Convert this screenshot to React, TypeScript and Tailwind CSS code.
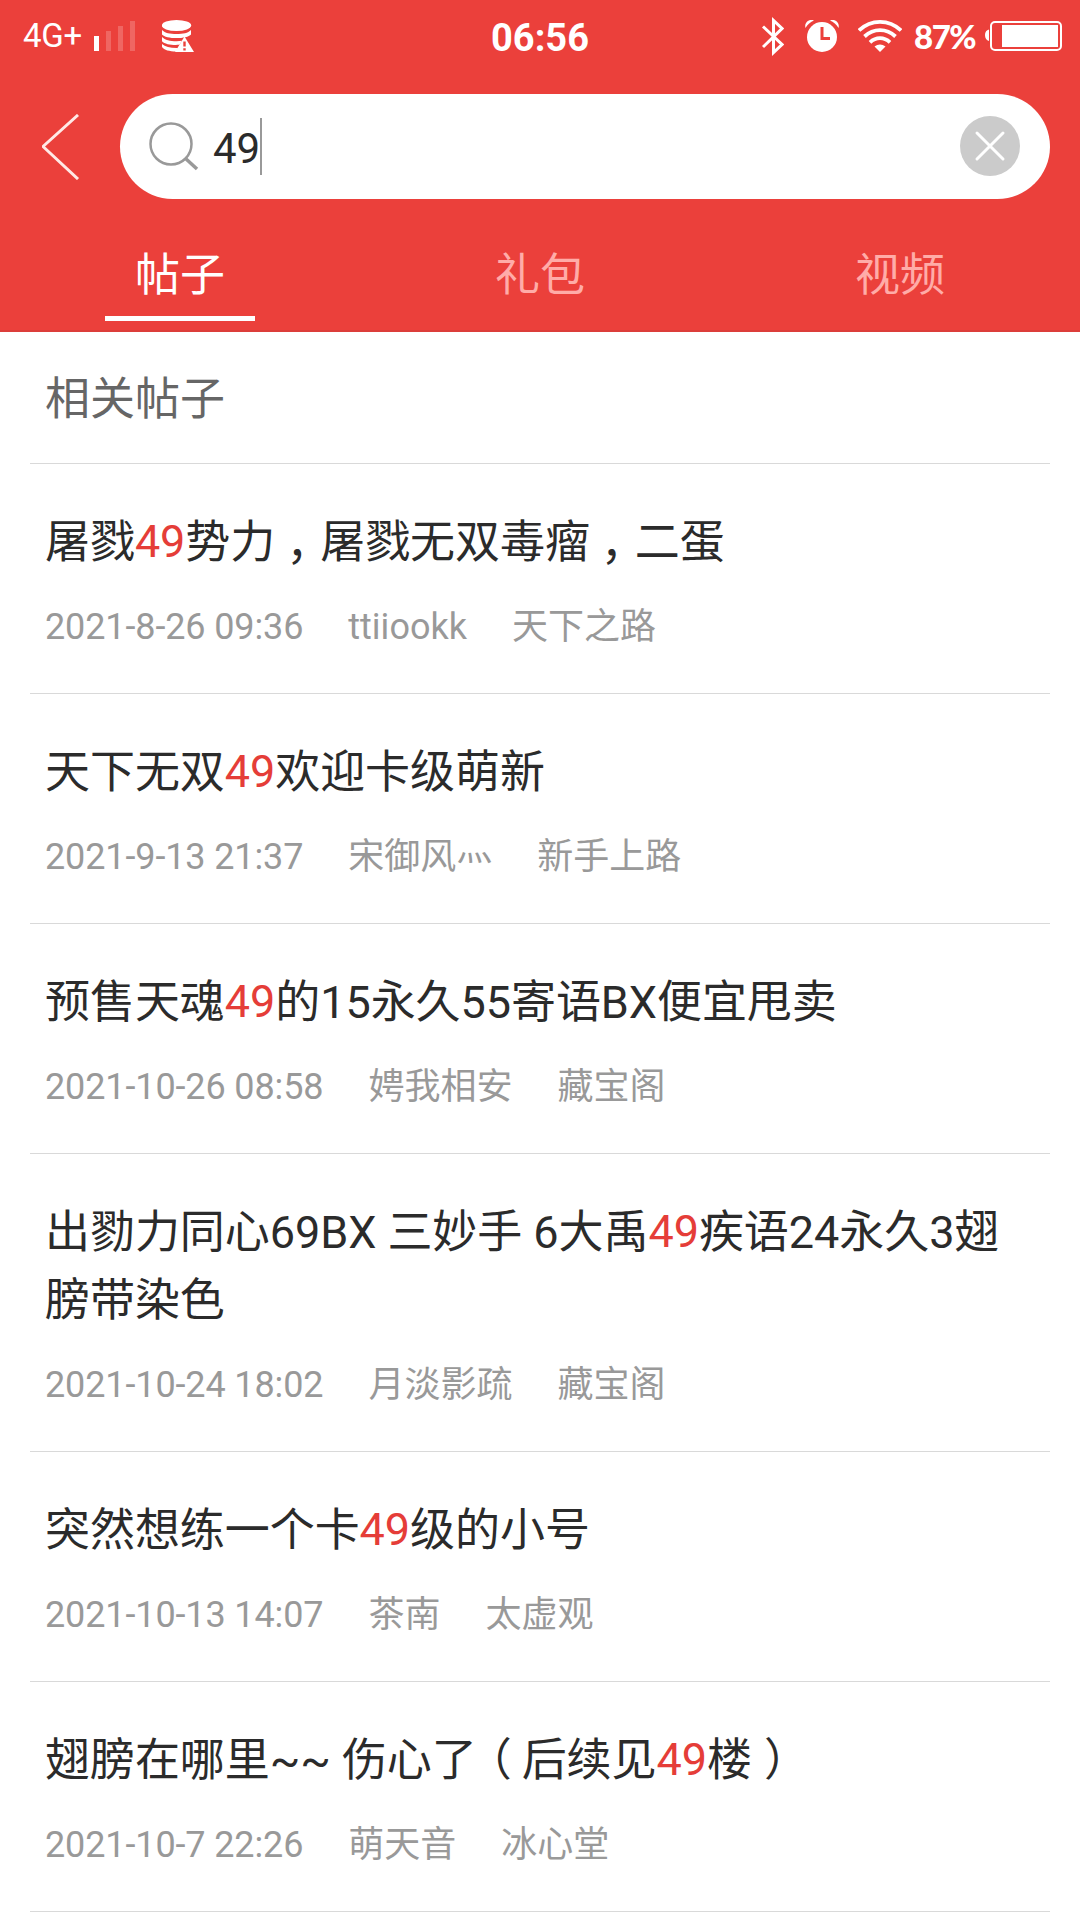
import React, { FC, useState } from "react";

interface Post {
  title: string;
  date: string;
  author: string;
  board: string;
}

const KEYWORD = "49";

const tabs = ["帖子", "礼包", "视频"];

const posts: Post[] = [
  { title: "屠戮49势力，屠戮无双毒瘤，二蛋", date: "2021-8-26 09:36", author: "ttiiookk", board: "天下之路" },
  { title: "天下无双49欢迎卡级萌新", date: "2021-9-13 21:37", author: "宋御风灬", board: "新手上路" },
  { title: "预售天魂49的15永久55寄语BX便宜甩卖", date: "2021-10-26 08:58", author: "娉我相安", board: "藏宝阁" },
  { title: "出勠力同心69BX 三妙手 6大禹49疾语24永久3翅膀带染色", date: "2021-10-24 18:02", author: "月淡影疏", board: "藏宝阁" },
  { title: "突然想练一个卡49级的小号", date: "2021-10-13 14:07", author: "茶南", board: "太虚观" },
  { title: "翅膀在哪里~~ 伤心了（后续见49楼）", date: "2021-10-7 22:26", author: "萌天音", board: "冰心堂" },
];

const StatusBar: FC = () => (
  <div className="relative flex h-[72px] items-center justify-between pl-[23px] pr-[18px] text-white">
    <div className="flex items-center">
      <span className="w-[59px] text-[33px] leading-[70px] tracking-[-0.3px] whitespace-nowrap">4G+</span>
      <svg className="ml-3 h-[72px] w-[41px]" viewBox="94 0 41 72" fill="#fff">
        <rect x="94" y="36" width="5" height="15" />
        <rect x="106" y="31" width="5" height="20" opacity=".2" />
        <rect x="118" y="26" width="5" height="25" opacity=".2" />
        <rect x="130" y="21" width="5" height="30" opacity=".2" />
      </svg>
      <svg className="ml-[27px] h-[72px] w-[32px]" viewBox="162 0 32 72" fill="#fff">
        <ellipse cx="176.500" cy="25.500" rx="14.700" ry="5.500" />
        <path d="M162 30c3 3.300 8 4 14.500 4s11.500-.7 14.500-4v4.500c-2 2.500-8 3.600-14.500 3.600S164 37 162 34.500z" />
        <path d="M162 37c3 3 8 4.200 14.500 4.200 2 0 4-.1 5.500-.4l-2.500 4c-7 .5-14.500-.3-17.500-3.600z" />
        <path d="M162 44c3 2.700 8 4 14.500 4h1.500l-2 3.500c-6.500 0-12-1.500-14-4.500z" />
        <path fillRule="evenodd" d="M184.500 36.500L194 52h-19zM183.300 41.500v5h2.400v-5zM183.300 48.200v2.300h2.400v-2.300z" />
      </svg>
    </div>
    <div className="absolute inset-x-0 top-0 text-center text-[38px] leading-[77px] font-bold">06:56</div>
    <div className="flex items-center">
      <svg className="h-[72px] w-[22px]" viewBox="762 0 22 72" fill="none" stroke="#fff" strokeWidth="3">
        <path d="M763 26.500l19 18-8.500 8V20.500l8.500 8-19 18.500" />
      </svg>
      <svg className="ml-[21px] h-[72px] w-[34px]" viewBox="805 0 34 72">
        <circle cx="822" cy="37" r="15" fill="#fff" />
        <path d="M822 27v11.500h8" fill="none" stroke="#eb403b" strokeWidth="3" />
        <path d="M805.500 28c-1.500-5 3-9.500 8.500-7.500-3.500 1.500-6.500 4-8.500 7.500zM838.500 28c1.500-5-3-9.500-8.500-7.500 3.500 1.500 6.500 4 8.500 7.500z" fill="#fff" />
      </svg>
      <svg className="ml-[19px] h-[72px] w-[44px]" viewBox="858 0 44 72" fill="none" stroke="#fff" strokeWidth="3.800">
        <path d="M859 30.500c12-11.500 30-11.500 42 0M864.500 36.500c9-8.500 22-8.500 31 0M870 42.300c6-5.500 14-5.500 20 0" />
        <path d="M874.500 46.500c3.500-2.800 7.500-2.800 11 0L880 52z" fill="#fff" stroke="none" />
      </svg>
      <span className="ml-3 w-[62px] font-[Lato] text-[33px] leading-[75px] font-black tracking-[-1.5px] whitespace-nowrap">87%</span>
      <svg className="ml-[9px] h-[72px] w-[77px]" viewBox="985 0 77 72" fill="#fff">
        <path d="M989 29.500c-2.500.5-4 2.500-4 5.500s1.500 5.500 4 6z" />
        <rect x="991" y="22" width="70" height="28" rx="4" fill="none" stroke="#fff" strokeWidth="2" />
        <rect x="1002" y="25" width="56" height="22" />
      </svg>
    </div>
  </div>
);

// Full-width punctuation sits in the middle of its cell
const Punctuated: FC<{ text: string }> = ({ text }) => (
  <>
    {text.split(/([，（）灬])/).map((part, i) => {
      if (part === "，") return <span key={i} className="relative top-[2px] left-[11px]">{part}</span>;
      if (part === "（") return <span key={i} className="relative -left-[10px]">{part}</span>;
      if (part === "）") return <span key={i} className="relative left-[12px]">{part}</span>;
      if (part === "灬") return <span key={i} className="relative -top-[8px]">{part}</span>;
      return part;
    })}
  </>
);

const PostItem: FC<{ post: Post }> = ({ post }) => {
  const [before, after] = post.title.split(KEYWORD);

  return (
    <li className="border-b border-[#d9d9d9] px-[15px] pt-[45px] pb-[45px]">
      <h2 className="text-[45px] leading-[68px] tracking-[-0.06px] text-[#2b2b2b]">
        <Punctuated text={before} />
        <span className="relative -top-px text-[#e53d38]">{KEYWORD}</span>
        <Punctuated text={after} />
      </h2>
      <div className="mt-[29px] flex gap-[45px] text-[36px] leading-[42px] whitespace-nowrap text-[#999]">
        <span className="tracking-[-0.12px]">{post.date}</span>
        <span><Punctuated text={post.author} /></span>
        <span>{post.board}</span>
      </div>
    </li>
  );
};

const App: FC = () => {
  const [active, setActive] = useState(0);

  return (
    <div className="h-[1920px] w-[1080px] overflow-hidden bg-white font-[Roboto,'Noto_Sans_CJK_SC',sans-serif]">
      <header className="h-[332px] border-b-2 border-[#dc3d3a] bg-[#eb403b]">
        <StatusBar />

        {/* Search */}
        <div className="flex items-center pt-[22px] pr-[30px] pl-[42px]">
          <svg className="h-[66px] w-[38px]" viewBox="42 114 38 66" fill="none" stroke="#ffe9e6" strokeWidth="3">
            <path d="M78 115L43 146.500L78 179" />
          </svg>
          <div className="ml-10 flex h-[105px] w-[930px] items-center rounded-full bg-white pr-[30px] pl-[29px]">
            <svg className="h-[50px] w-[50px]" viewBox="149 121 50 50" fill="none" stroke="#999">
              <circle cx="171" cy="143" r="20.500" strokeWidth="2.500" />
              <path d="M185 157l12 11" strokeWidth="3.500" />
            </svg>
            <span className="ml-[14px] pt-[4px] text-[42px] leading-[60px] text-[#2b2b2b]">{KEYWORD}</span>
            <span className="h-[57px] w-[2px] bg-[#999]" />
            <svg className="mb-px ml-auto h-[60px] w-[60px]" viewBox="0 0 60 60">
              <circle cx="30" cy="30" r="30" fill="#cbcbcb" />
              <path d="M17 17l26 26M43 17L17 43" stroke="#fff" strokeWidth="3" strokeLinecap="round" />
            </svg>
          </div>
        </div>

        {/* Tabs */}
        <nav className="mt-[37px] grid grid-cols-3">
          {tabs.map((tab, i) => (
            <button key={tab} onClick={() => setActive(i)} className="flex flex-col items-center">
              <span className={`h-[80px] text-[45px] leading-[80px] ${i === active ? "text-white" : "text-[#ffaca8]"}`}>{tab}</span>
              <span className={`h-[5px] w-[150px] ${i === active ? "bg-white" : "bg-transparent"}`} />
            </button>
          ))}
        </nav>
      </header>

      <main className="px-[30px]">
        <div className="border-b border-[#d9d9d9] px-[15px] pt-[5px] text-[45px] leading-[126px] text-[#666]">相关帖子</div>
        <ul>
          {posts.map((post) => (
            <PostItem key={post.date} post={post} />
          ))}
        </ul>
      </main>
    </div>
  );
};

export default App;
